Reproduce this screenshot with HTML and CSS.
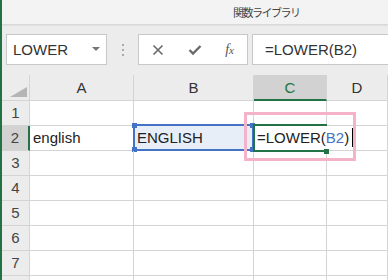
FILE: index.html
```html
<!DOCTYPE html>
<html lang="ja">
<head>
    <meta charset="UTF-8">
    <title>LOWER関数</title>
    <link rel="stylesheet" href="styles.css">
</head>
<body>
    <div class="app">
      <div class="ribbon">
          <span class="group-name">関数ライブラリ</span>
      </div>

      <!-- 数式バー -->
      <div class="fbar">
          <div class="namebox">
              <span>LOWER</span>
              <span class="dd"></span>
          </div>
          <div class="grip"><i></i><i></i><i></i></div>
          <div class="fbtns">
              <svg width="12" height="12" viewBox="0 0 12 12"><path d="M1.5 1.5 L10.5 10.5 M10.5 1.5 L1.5 10.5" stroke="#6a6a6a" stroke-width="1.6" fill="none"/></svg>
              <svg width="14" height="12" viewBox="0 0 14 12"><path d="M1.5 6 L5 9.5 L12.5 2" stroke="#6a6a6a" stroke-width="2.4" fill="none"/></svg>
              <span class="fx">f<small>x</small></span>
          </div>
          <div class="finput">=LOWER(B2)</div>
      </div>

      <div class="sheet">
          <div class="corner"><span class="tri"></span></div>
          <div class="ch">A</div>
          <div class="ch">B</div>
          <div class="ch active">C</div>
          <div class="ch">D</div>

          <div class="rh">1</div>
          <div class="cell"></div><div class="cell"></div><div class="cell"></div><div class="cell"></div>

          <div class="rh active">2</div>
          <div class="cell">english</div>
          <div class="cell ref">ENGLISH<span class="refbox"><b class="h tl"></b><b class="h bl"></b><b class="h tr"></b><b class="h br"></b></span></div>
          <div class="cell edit">=LOWER(<span class="b2">B2</span>)<span class="caret"></span><span class="fill"></span></div>
          <div class="cell"></div>

          <div class="rh">3</div>
          <div class="cell"></div><div class="cell"></div><div class="cell"></div><div class="cell"></div>
          <div class="rh">4</div>
          <div class="cell"></div><div class="cell"></div><div class="cell"></div><div class="cell"></div>
          <div class="rh">5</div>
          <div class="cell"></div><div class="cell"></div><div class="cell"></div><div class="cell"></div>
          <div class="rh">6</div>
          <div class="cell"></div><div class="cell"></div><div class="cell"></div><div class="cell"></div>
          <div class="rh">7</div>
          <div class="cell"></div><div class="cell"></div><div class="cell"></div><div class="cell"></div>
          <!-- 8行目は見切れ -->
          <div class="rh"></div>
          <div class="cell"></div><div class="cell"></div><div class="cell"></div><div class="cell"></div>

          <div class="mark"></div>
      </div>
    </div>
</body>
</html>
```

FILE: styles.css
```css
  body {
      margin: 0;
      font-family: "Liberation Sans", Arial, sans-serif;
      background-color: #fff;
  }

  .app {
      width: 388px;
      height: 280px;
      overflow: hidden;
      border-left: 2px solid #217346;
      box-sizing: border-box;
  }

  .ribbon {
      height: 24px;
      background-color: #f3f3f3;
      box-shadow: 0 1px 2px rgba(0, 0, 0, 0.12);
      position: relative;
      z-index: 1;
  }

  .group-name {
      display: block;
      padding: 5px 0 0 231px;
      font-family: "Noto Sans CJK JP", sans-serif;
      font-size: 11px;
      letter-spacing: -1.5px;
      line-height: 14px;
      color: #444;
  }

  .fbar {
      height: 51px;
      background-color: #ececec;
      display: flex;
      align-items: center;
      padding: 0 0 0 4px;
      box-sizing: border-box;
  }

  .namebox {
      width: 101px;
      height: 31px;
      box-sizing: border-box;
      background-color: #fff;
      border: 1px solid #c8c8c8;
      display: flex;
      align-items: center;
      justify-content: space-between;
      padding: 0 6px 0 6px;
      font-size: 15px;
      color: #333;
  }

  .dd {
      border-left: 4px solid transparent;
      border-right: 4px solid transparent;
      border-top: 4px solid #777;
      margin-top: -1px;
  }

  .grip {
      width: 31px;
      display: flex;
      flex-direction: column;
      align-items: center;
      gap: 3px;
  }

  .grip i {
      width: 2px;
      height: 2px;
      background-color: #aaa;
  }

  .fbtns {
      width: 110px;
      height: 31px;
      box-sizing: border-box;
      background-color: #fff;
      border: 1px solid #c8c8c8;
      display: flex;
      align-items: center;
      justify-content: space-between;
      padding: 0 13px 0 13px;
  }

  .fx {
      font-family: "Liberation Serif", serif;
      font-style: italic;
      font-size: 14px;
      color: #555;
  }

  .fx small {
      font-size: 11px;
  }

  .finput {
      flex: 1;
      height: 31px;
      margin-left: 4px;
      box-sizing: border-box;
      background-color: #fff;
      border: 1px solid #c8c8c8;
      border-right: none;
      padding: 0 0 0 12px;
      font-size: 15px;
      line-height: 29px;
      color: #333;
  }

  .sheet {
      display: grid;
      grid-template-columns: 28px 104px 120px 73px 1fr;
      grid-template-rows: 26px repeat(8, 25px);
      position: relative;
  }

  .sheet > div {
      box-sizing: border-box;
      border-right: 1px solid #d4d4d4;
      border-bottom: 1px solid #d4d4d4;
  }

  .corner {
      background-color: #ececec;
      position: relative;
  }

  .tri {
      position: absolute;
      right: 2px;
      bottom: 3px;
      width: 0;
      height: 0;
      border-left: 17px solid transparent;
      border-bottom: 10px solid #b5b5b5;
  }

  .ch {
      background-color: #ececec;
      text-align: center;
      font-size: 15px;
      line-height: 25px;
      color: #333;
  }

  .ch.active {
      background-color: #d2d2d2;
      color: #217346;
      border-bottom: 2px solid #217346;
  }

  .rh {
      background-color: #ececec;
      text-align: center;
      font-size: 15px;
      line-height: 24px;
      color: #444;
  }

  .rh.active {
      background-color: #d2d2d2;
      border-right: 2px solid #217346 !important;
  }

  .cell {
      font-size: 15px;
      line-height: 24px;
      padding-left: 3px;
      color: #222;
      white-space: nowrap;
      position: relative;
  }

  .ref {
      background-color: #e8eef7;
  }

  .refbox {
      position: absolute;
      left: -1px;
      top: -2px;
      right: -1px;
      bottom: -1px;
      border: 2px solid #4472c4;
  }

  .h {
      position: absolute;
      width: 5px;
      height: 5px;
      background-color: #4472c4;
  }

  .tl { left: -3px; top: -3px; }
  .bl { left: -3px; bottom: -3px; }
  .tr { right: -3px; top: -3px; }
  .br { right: -3px; bottom: -3px; }

  .edit {
      border-right: none !important;
      border-top: 2px solid #217346;
      border-bottom: 2px solid #217346 !important;
      border-left: 2px solid #217346;
      margin: -2px 0 -1px -1px;
      line-height: 24px;
      padding-left: 2px;
      z-index: 2;
  }

  .b2 {
      color: #4472c4;
  }

  .caret {
      display: inline-block;
      width: 1px;
      height: 19px;
      background-color: #000;
      vertical-align: middle;
      margin-left: 3px;
      margin-top: -3px;
  }

  .fill {
      position: absolute;
      right: -2px;
      bottom: -4px;
      width: 5px;
      height: 5px;
      background-color: #217346;
  }

  .mark {
      position: absolute;
      left: 242px;
      top: 37px;
      width: 112px;
      height: 49px;
      box-sizing: border-box;
      border: 3px solid #f4b3c8 !important;
      z-index: 3;
  }
```
